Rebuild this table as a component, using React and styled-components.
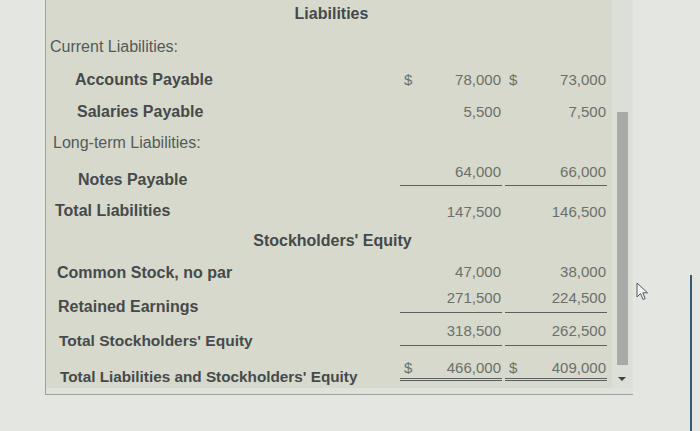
import React from "react";
import styled, { createGlobalStyle } from "styled-components";

const GlobalStyle = createGlobalStyle`
  html, body {
    margin: 0;
    padding: 0;
    background: #e4e6e2;
    font-family: "Liberation Sans", Arial, sans-serif;
  }
`;

const Page = styled.div`
  position: relative;
  width: 700px;
  height: 431px;
  display: flex;
  align-items: flex-start;
  padding-left: 45px;
  box-sizing: border-box;
  overflow: hidden;
`;

const Panel = styled.div`
  width: 588px;
  height: 395px;
  display: flex;
  background: #dfe1db;
  border-left: 1px solid #9fa29f;
  border-bottom: 1px solid #9fa29f;
  box-sizing: border-box;
`;

const Table = styled.div`
  width: 566px;
  height: 388px;
  background: #d6d9cb;
  padding: 0 5px 0 4px;
  box-sizing: border-box;
`;

const Row = styled.div`
  height: ${(p) => p.h}px;
  display: grid;
  grid-template-columns: 1fr 102px 102px;
  column-gap: 3px;
  align-items: start;
`;

const Heading = styled.div`
  grid-column: 1 / -1;
  text-align: center;
  padding-top: ${(p) => p.pad}px;
  padding-left: ${(p) => p.shift}px;
  font-size: 16px;
  line-height: 18px;
  font-weight: bold;
  color: #45494b;
`;

const Label = styled.div`
  padding-top: ${(p) => p.pad}px;
  padding-left: ${(p) => p.x}px;
  font-size: ${(p) => p.size || 16}px;
  line-height: 18px;
  font-weight: ${(p) => (p.bold ? "bold" : "normal")};
  color: ${(p) => (p.bold ? "#464a4c" : "#55595b")};
  white-space: nowrap;
`;

const Amount = styled.div`
  display: flex;
  justify-content: space-between;
  padding: ${(p) => p.pad}px 1px ${(p) => p.bottom}px 4px;
  font-size: 15px;
  line-height: 18px;
  color: #6c706d;
  border-bottom: ${(p) =>
    p.line === "double"
      ? "3px double #5d615d"
      : p.line === "single"
      ? "1px solid #5d615d"
      : "none"};
`;

const Scrollbar = styled.div`
  width: 20px;
  height: 388px;
  display: flex;
  flex-direction: column;
  align-items: center;
  padding-top: 112px;
  box-sizing: border-box;
  background: #dcdfd8;
`;

const Thumb = styled.div`
  width: 11px;
  height: 253px;
  background: #a7aaa7;
`;

const Arrow = styled.div`
  margin-top: 12px;
  width: 0;
  height: 0;
  border-left: 4px solid transparent;
  border-right: 4px solid transparent;
  border-top: 4px solid #3e4244;
`;

const Edge = styled.div`
  margin-left: auto;
  margin-right: 8px;
  margin-top: 275px;
  width: 2px;
  height: 156px;
  background: #2f5b78;
`;

const Cursor = styled.svg`
  position: absolute;
  left: 636px;
  top: 282px;
`;

const rows = [
  { head: "Liabilities", h: 30, pad: 5, shift: 6 },
  { label: "Current Liabilities:", x: 0, h: 33, lp: 8 },
  { label: "Accounts Payable", bold: true, x: 25, h: 33, lp: 8, ap: 8,
    a: [["$", "78,000"], ["$", "73,000"]] },
  { label: "Salaries Payable", bold: true, x: 27, h: 32, lp: 7, ap: 7,
    a: [["", "5,500"], ["", "7,500"]] },
  { label: "Long-term Liabilities:", x: 3, h: 30, lp: 6 },
  { label: "Notes Payable", bold: true, x: 28, h: 38, lp: 13, ap: 5, ab: 4,
    line: "single", a: [["", "64,000"], ["", "66,000"]] },
  { label: "Total Liabilities", bold: true, x: 5, h: 30, lp: 6, ap: 7,
    a: [["", "147,500"], ["", "146,500"]] },
  { head: "Stockholders' Equity", h: 31, pad: 6, shift: 8 },
  { label: "Common Stock, no par", bold: true, x: 7, h: 31, lp: 7, ap: 6,
    a: [["", "47,000"], ["", "38,000"]] },
  { label: "Retained Earnings", bold: true, x: 8, h: 34, lp: 10, ap: 1, ab: 5,
    line: "single", a: [["", "271,500"], ["", "224,500"]] },
  { label: "Total Stockholders' Equity", bold: true, x: 9, size: 15.5, h: 36, lp: 10,
    ap: 0, ab: 5, line: "single", a: [["", "318,500"], ["", "262,500"]] },
  { label: "Total Liabilities and Stockholders' Equity", bold: true, x: 10, size: 15.3,
    h: 34, lp: 10, ap: 1, ab: 1, line: "double",
    a: [["$", "466,000"], ["$", "409,000"]] },
];

const App = () => (
  <>
    <GlobalStyle />
    <Page>
      <Panel>
        <Table>
          {rows.map((r, i) =>
            r.head ? (
              <Row key={i} h={r.h}>
                <Heading pad={r.pad} shift={r.shift}>
                  {r.head}
                </Heading>
              </Row>
            ) : (
              <Row key={i} h={r.h}>
                <Label pad={r.lp} bold={r.bold} x={r.x} size={r.size}>
                  {r.label}
                </Label>
                {r.a &&
                  r.a.map(([sign, value], j) => (
                    <Amount key={j} pad={r.ap} bottom={r.ab || 0} line={r.line}>
                      <span>{sign}</span>
                      <span>{value}</span>
                    </Amount>
                  ))}
              </Row>
            )
          )}
        </Table>
        <Scrollbar>
          <Thumb />
          <Arrow />
        </Scrollbar>
      </Panel>
      <Edge />
      <Cursor width="14" height="20" viewBox="0 0 14 20">
        <path
          d="M1 1 L1 15 L4.5 11.5 L7 17.5 L9.2 16.6 L6.8 10.8 L11.5 10.8 Z"
          fill="#f4f5f2"
          stroke="#50585c"
          strokeWidth="1"
          strokeLinejoin="round"
        />
      </Cursor>
    </Page>
  </>
);

export default App;
